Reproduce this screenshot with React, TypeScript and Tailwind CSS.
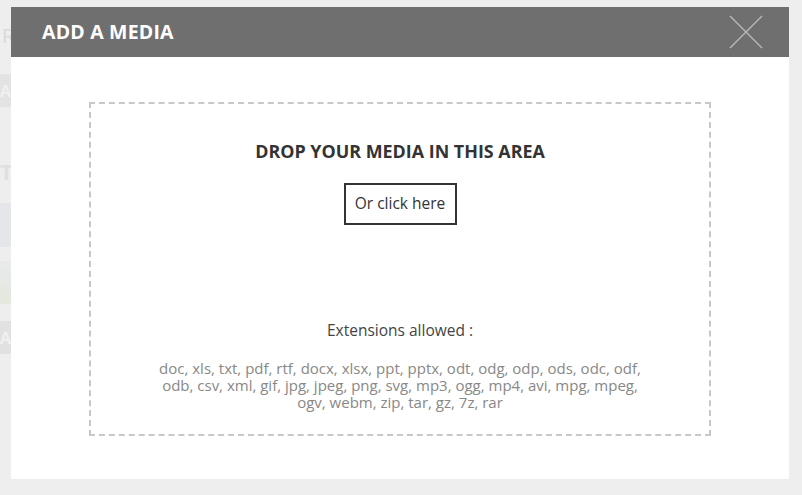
import React from "react";

const extLines = [
  "doc, xls, txt, pdf, rtf, docx, xlsx, ppt, pptx, odt, odg, odp, ods, odc, odf,",
  "odb, csv, xml, gif, jpg, jpeg, png, svg, mp3, ogg, mp4, avi, mpg, mpeg,",
  "ogv, webm, zip, tar, gz, 7z, rar",
];

function CloseIcon() {
  return (
    <svg width="34" height="34" viewBox="0 0 34 34" fill="none">
      <path d="M1 1L33 33M33 1L1 33" stroke="#b9b9b9" strokeWidth="1.4" />
    </svg>
  );
}

export default function App() {
  return (
    <div
      className="relative h-[495px] w-full overflow-hidden bg-[#eeeeee]"
      style={{ fontFamily: '"Open Sans", "Noto Sans", sans-serif' }}
    >
      {/* page behind the modal */}
      <div className="flex w-[80px] flex-col opacity-40">
        <div className="mt-[24px] h-[24px] pl-[2px] text-[20px] leading-[24px] text-[#bbb]">Ru</div>
        <div className="mt-[26px] flex h-[33px] items-center bg-[#d5d5d5] text-[16px] font-bold text-[#f4f4f4]">AD</div>
        <div className="mt-[52px] h-[24px] text-[22px] font-bold leading-[24px] text-[#ccc]">T</div>
        <div className="mt-[20px] h-[44px] bg-[#d9dce3]" />
        <div className="mt-[14px] h-[43px] bg-gradient-to-b from-[#dfe4ec] to-[#d8e0c4]" />
        <div className="mt-[17px] flex h-[33px] items-center bg-[#cfcfcf] text-[16px] font-bold text-[#f4f4f4]">AD</div>
      </div>

      {/* modal */}
      <div className="absolute left-[11px] top-[7px] flex h-[472px] w-[778px] flex-col bg-white">
        <div className="flex h-[50px] shrink-0 items-center justify-between bg-[#6f6f6f] pl-[31px] pr-[26px]">
          <h1 className="text-[19.5px] font-bold tracking-[0.2px] text-white">ADD A MEDIA</h1>
          <button className="flex h-[34px] w-[34px] items-center justify-center">
            <CloseIcon />
          </button>
        </div>
        <div className="px-[78px] pt-[45px]">
          <div className="flex h-[334px] flex-col items-center border-2 border-dashed border-[#c8c8c8] pt-[37px] text-center">
            <h2 className="text-[17.9px] font-bold leading-[20px] text-[#333333]">
              DROP YOUR MEDIA IN THIS AREA
            </h2>
            <button className="mt-[22px] h-[42px] w-[113px] border-2 border-[#333333] text-[15.5px] text-[#333333]">
              Or click here
            </button>
            <p className="mt-[95px] text-[15.5px] leading-[20px] text-[#444444]">Extensions allowed :</p>
            <p className="mt-[20px] text-[15px] leading-[17px] text-[#888888]">
              {extLines.map((l, i) => (
                <React.Fragment key={l}>
                  {i > 0 && <br />}
                  {l}
                </React.Fragment>
              ))}
            </p>
          </div>
        </div>
      </div>
    </div>
  );
}
